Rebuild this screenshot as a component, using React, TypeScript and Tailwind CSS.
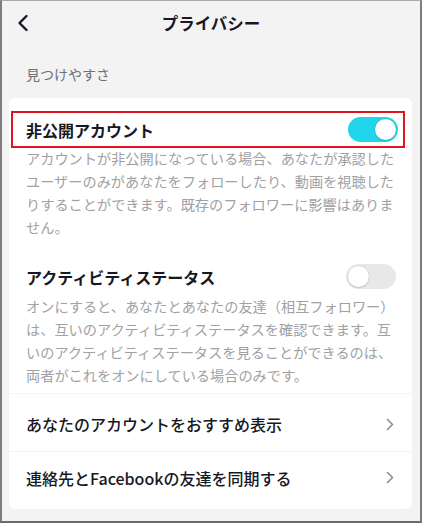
const FONT = "font-['Noto_Sans_CJK_JP','Noto_Sans',sans-serif]";

function Toggle({ on }: { on: boolean }) {
  return (
    <div
      className={`flex h-[25px] w-[50px] shrink-0 items-center rounded-full p-[2px] ${
        on ? "justify-end bg-[#20d5ec]" : "justify-start bg-[#e8e8e9]"
      }`}
    >
      <span className="h-[21px] w-[21px] rounded-full bg-white shadow-[0_0_0_0.5px_rgba(0,0,0,0.08),0_1px_2px_rgba(0,0,0,0.12)]" />
    </div>
  );
}

function Chevron() {
  return (
    <svg width="8" height="13" viewBox="0 0 8 13" fill="none" className="shrink-0">
      <polyline
        points="1.5,1.5 6.5,6.5 1.5,11.5"
        stroke="#8a8b91"
        strokeWidth="1.6"
        strokeLinecap="round"
        strokeLinejoin="round"
      />
    </svg>
  );
}

function Desc({ lines }: { lines: string[] }) {
  return (
    <div className="pl-[17px] pr-[10px] text-[14.2px] leading-[23px] text-[#a1a1a3]">
      {lines.map((l) => (
        <span key={l} className="block whitespace-nowrap">
          {l}
        </span>
      ))}
    </div>
  );
}

export default function App() {
  return (
    <div
      className={`${FONT} box-border flex h-[523px] w-[422px] flex-col border-x-2 border-b-2 border-t border-x-[#7d7d7d] border-b-[#6a6a6a] border-t-[#a8a8a8] bg-[#f3f3f3] text-[#161823]`}
    >
      <header className="grid h-[44px] shrink-0 grid-cols-[44px_1fr_44px] items-center">
        <div className="flex pl-[15px]">
          <svg width="12" height="18" viewBox="0 0 12 18" fill="none">
            <polyline
              points="9.5,2 2.5,9 9.5,16"
              stroke="#161823"
              strokeWidth="2.4"
              strokeLinecap="round"
              strokeLinejoin="round"
            />
          </svg>
        </div>
        <h1 className="text-center text-[16.5px] font-bold">プライバシー</h1>
        <div />
      </header>

      <p className="mt-[19px] pl-[24px] text-[14px] leading-[20px] text-[#707072]">見つけやすさ</p>

      <section className="ml-[7px] mr-[8px] mt-[14px] rounded-md bg-white pb-[1px] pt-[13px]">
        <div className="ml-[2px] mr-[7px] flex h-[37px] items-center justify-between border-2 border-[#e0141e] pl-[13px] pr-[5px]">
          <span className="text-[16px] font-bold">非公開アカウント</span>
          <Toggle on />
        </div>
        <div className="-mt-[1.5px]">
          <Desc
            lines={[
              "アカウントが非公開になっている場合、あなたが承認した",
              "ユーザーのみがあなたをフォローしたり、動画を視聴した",
              "りすることができます。既存のフォロワーに影響はありま",
              "せん。",
            ]}
          />
        </div>

        <div className="mt-[20px] flex h-[36px] items-center justify-between pl-[17px] pr-[16px]">
          <span className="text-[16px] font-bold">アクティビティステータス</span>
          <Toggle on={false} />
        </div>
        <Desc
          lines={[
            "オンにすると、あなたとあなたの友達（相互フォロワー）",
            "は、互いのアクティビティステータスを確認できます。互",
            "いのアクティビティステータスを見ることができるのは、",
            "両者がこれをオンにしている場合のみです。",
          ]}
        />

        <div className="mt-[6px] flex h-[58px] items-center justify-between border-t border-[#f5f5f5] pl-[17px] pr-[18px] pt-[4px]">
          <span className="text-[16px] font-medium">あなたのアカウントをおすすめ表示</span>
          <Chevron />
        </div>
        <div className="flex h-[57px] items-center justify-between border-t border-[#f5f5f5] pb-[4px] pl-[17px] pr-[18px]">
          <span className="text-[16px] font-medium">連絡先とFacebookの友達を同期する</span>
          <Chevron />
        </div>
      </section>
    </div>
  );
}
